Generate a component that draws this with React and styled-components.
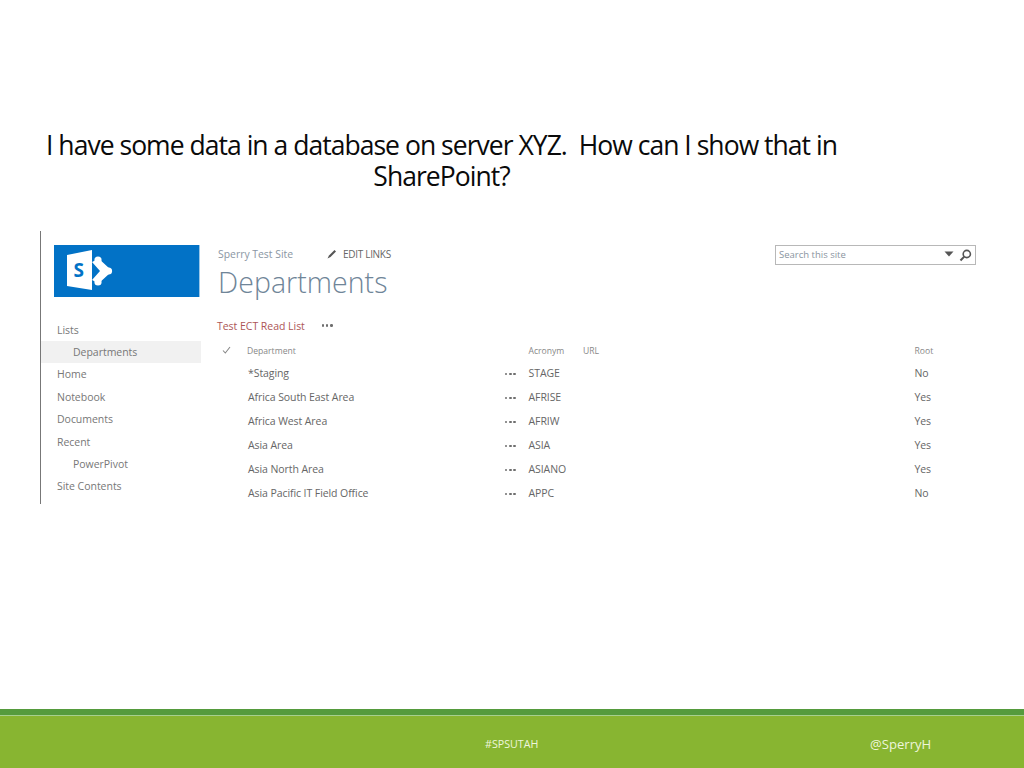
import React from "react";
import styled, { createGlobalStyle } from "styled-components";

const Global = createGlobalStyle`
  html, body { margin: 0; padding: 0; background: #fff; }
  body { font-family: "Open Sans", "Liberation Sans", sans-serif; }
`;

const Slide = styled.div`
  width: 1024px;
  height: 768px;
  display: flex;
  flex-direction: column;
  overflow: hidden;
  background: #fff;
`;

const Title = styled.h1`
  margin: 0;
  padding: 130px 0 0 46px;
  width: 791px;
  height: 101px;
  flex: none;
  font-size: 26.5px;
  line-height: 31px;
  font-weight: 400;
  letter-spacing: -0.97px;
  color: #0a0a0a;
  text-align: center;
  white-space: nowrap;
`;

const Shot = styled.div`
  margin-left: 40px;
  width: 945px;
  height: 273px;
  flex: none;
  border-left: 1px solid #777;
  display: grid;
  grid-template-columns: 160px 1fr;
`;

const Side = styled.nav`
  display: flex;
  flex-direction: column;
`;

const Logo = styled.div`
  margin: 14px 0 0 13px;
  width: 146px;
  height: 52px;
  background: #0272c6;
  border-right: 1px solid #9cc7e8;
  display: flex;
  align-items: center;
  padding-left: 13px;
  box-sizing: border-box;
`;

const NavList = styled.div`
  margin-top: 21.6px;
  display: flex;
  flex-direction: column;
`;

const NavItem = styled.div`
  height: 22.4px;
  line-height: 22.4px;
  font-size: 10.5px;
  letter-spacing: -0.03px;
  color: #777;
  padding-left: ${p => (p.$sub ? 32 : 16)}px;
  background: ${p => (p.$active ? "#f1f1f1" : "transparent")};
`;

const Main = styled.div`
  display: flex;
  flex-direction: column;
  padding-left: 16px;
`;

const Head = styled.div`
  height: 85px;
  display: flex;
  justify-content: space-between;
  align-items: flex-start;
`;

const HeadLeft = styled.div`
  padding-left: 1px;
`;

const Crumb = styled.div`
  margin-top: 14px;
  display: flex;
  align-items: center;
  height: 17px;
`;

const SiteLink = styled.span`
  font-size: 10.4px;
  color: #8a96a3;
  width: 109px;
`;

const EditLinks = styled.span`
  font-size: 10px;
  letter-spacing: -0.3px;
  color: #666;
  display: flex;
  align-items: center;
  gap: 6px;
`;

const PageTitle = styled.div`
  font-size: 28.5px;
  line-height: 38px;
  font-weight: 300;
  letter-spacing: 0.05px;
  color: #6f8598;
  margin-top: 1px;
`;

const Search = styled.div`
  margin: 14px 10px 0 0;
  width: 201px;
  height: 20px;
  box-sizing: border-box;
  border: 1px solid #b8b8b8;
  display: flex;
  align-items: center;
  padding: 0 3px 2px 3px;
  font-size: 9.5px;
  color: #8a94a0;
`;

const SearchText = styled.span`
  flex: 1;
`;

const ListTitleRow = styled.div`
  display: flex;
  align-items: center;
  height: 19px;
  gap: 17px;
`;

const ListTitle = styled.span`
  font-size: 10.5px;
  letter-spacing: -0.03px;
  color: #ad5556;
`;

const Dots = styled.span`
  display: inline-flex;
  gap: 1.8px;
  align-items: center;
  justify-content: flex-start;
  padding-top: ${p => (p.$row ? 2 : 0)}px;
`;

const Dot = styled.i`
  display: block;
  width: 2.4px;
  height: 2.4px;
  border-radius: 50%;
  background: #6e6e6e;
`;

const Table = styled.div`
  margin-top: 5px;
  display: flex;
  flex-direction: column;
`;

const Row = styled.div`
  display: grid;
  grid-template-columns: 30px 258px 23.5px 54.5px 331.5px 60px;
  align-items: center;
  height: ${p => (p.$head ? 21 : 24)}px;
  font-size: ${p => (p.$head ? 8.6 : 10.5)}px;
  letter-spacing: ${p => (p.$head ? 0 : -0.08)}px;
  color: ${p => (p.$head ? "#888" : "#666")};
  white-space: nowrap;
`;

const Cell = styled.span`
  padding-left: ${p => p.$indent || 0}px;
`;

const Footer = styled.footer`
  margin-top: auto;
  flex: none;
  height: 59px;
  display: flex;
  flex-direction: column;
`;

const Band = styled.div`
  height: 6px;
  background: #559b3d;
  border-bottom: 1px solid #a6d08e;
`;

const FootBody = styled.div`
  flex: 1;
  padding-top: 4px;
  background: #88b531;
  display: grid;
  grid-template-columns: 485px 385px auto;
  align-items: center;
  color: #eef5dc;
`;

const Hash = styled.span`
  grid-column: 2;
  font-size: 10.7px;
`;

const Handle = styled.span`
  grid-column: 3;
  font-size: 13.1px;
`;

const nav = [
  { t: "Lists" },
  { t: "Departments", sub: true, active: true },
  { t: "Home" },
  { t: "Notebook" },
  { t: "Documents" },
  { t: "Recent" },
  { t: "PowerPivot", sub: true },
  { t: "Site Contents" },
];

const rows = [
  ["*Staging", "STAGE", "No"],
  ["Africa South East Area", "AFRISE", "Yes"],
  ["Africa West Area", "AFRIW", "Yes"],
  ["Asia Area", "ASIA", "Yes"],
  ["Asia North Area", "ASIANO", "Yes"],
  ["Asia Pacific IT Field Office", "APPC", "No"],
];

const Ellipsis = ({ row }) => (
  <Dots $row={row}>
    <Dot />
    <Dot />
    <Dot />
  </Dots>
);

const SpLogo = () => (
  <svg width="46" height="42" viewBox="0 0 46 42" aria-hidden="true">
    <path d="M0 5 L25 0 V40 L0 36 Z" fill="#fff" />
    <text x="6.5" y="27" fontFamily="Open Sans, sans-serif" fontWeight="700" fontSize="19" fill="#0272c6">S</text>
    <path d="M25 12 L31 9 L43 21 L31 33 L25 30 L33 21 Z" fill="#fff" />
    <path d="M30 9 L43 21 L30 33" fill="none" stroke="#fff" strokeWidth="3" />
    <circle cx="31" cy="10" r="3.6" fill="#fff" />
    <circle cx="31" cy="32" r="3.6" fill="#fff" />
    <circle cx="41.5" cy="21" r="3.6" fill="#fff" />
  </svg>
);

const Pencil = () => (
  <svg width="10" height="10" viewBox="0 0 10 10" aria-hidden="true">
    <path d="M0.5 9.5 L2 6.5 L7.5 1 L9 2.5 L3.5 8 Z" fill="#555" />
  </svg>
);

const Check = () => (
  <svg width="9" height="8" viewBox="0 0 9 8" aria-hidden="true">
    <path d="M1 4.5 L3.3 7 L8 1" fill="none" stroke="#888" strokeWidth="1.1" />
  </svg>
);

const Caret = () => (
  <svg width="10" height="6" viewBox="0 0 10 6" aria-hidden="true">
    <path d="M0.5 0.5 H9.5 L5 5.5 Z" fill="#555" />
  </svg>
);

const Lens = () => (
  <svg width="13" height="13" viewBox="0 0 13 13" style={{ marginLeft: 5, marginTop: 2 }} aria-hidden="true">
    <circle cx="7.8" cy="5" r="3.6" fill="none" stroke="#555" strokeWidth="1.6" />
    <path d="M5.2 7.6 L1.5 11.5" stroke="#555" strokeWidth="2" />
  </svg>
);

export default function App() {
  return (
    <Slide>
      <Global />
      <Title>
        I have some data in a database on server XYZ.&nbsp; How can I show that in
        <br />
        SharePoint?
      </Title>
      <Shot>
        <Side>
          <Logo>
            <SpLogo />
          </Logo>
          <NavList>
            {nav.map(n => (
              <NavItem key={n.t} $sub={n.sub} $active={n.active}>
                {n.t}
              </NavItem>
            ))}
          </NavList>
        </Side>
        <Main>
          <Head>
            <HeadLeft>
              <Crumb>
                <SiteLink>Sperry Test Site</SiteLink>
                <EditLinks>
                  <Pencil />
                  EDIT LINKS
                </EditLinks>
              </Crumb>
              <PageTitle>Departments</PageTitle>
            </HeadLeft>
            <Search>
              <SearchText>Search this site</SearchText>
              <Caret />
              <Lens />
            </Search>
          </Head>
          <ListTitleRow>
            <ListTitle>Test ECT Read List</ListTitle>
            <Ellipsis />
          </ListTitleRow>
          <Table>
            <Row $head>
              <Cell $indent={5}>
                <Check />
              </Cell>
              <Cell>Department</Cell>
              <span />
              <Cell>Acronym</Cell>
              <Cell>URL</Cell>
              <Cell>Root</Cell>
            </Row>
            {rows.map(([d, a, r]) => (
              <Row key={d}>
                <span />
                <Cell $indent={1}>{d}</Cell>
                <Ellipsis row />
                <Cell>{a}</Cell>
                <span />
                <Cell>{r}</Cell>
              </Row>
            ))}
          </Table>
        </Main>
      </Shot>
      <Footer>
        <Band />
        <FootBody>
          <Hash>#SPSUTAH</Hash>
          <Handle>@SperryH</Handle>
        </FootBody>
      </Footer>
    </Slide>
  );
}
